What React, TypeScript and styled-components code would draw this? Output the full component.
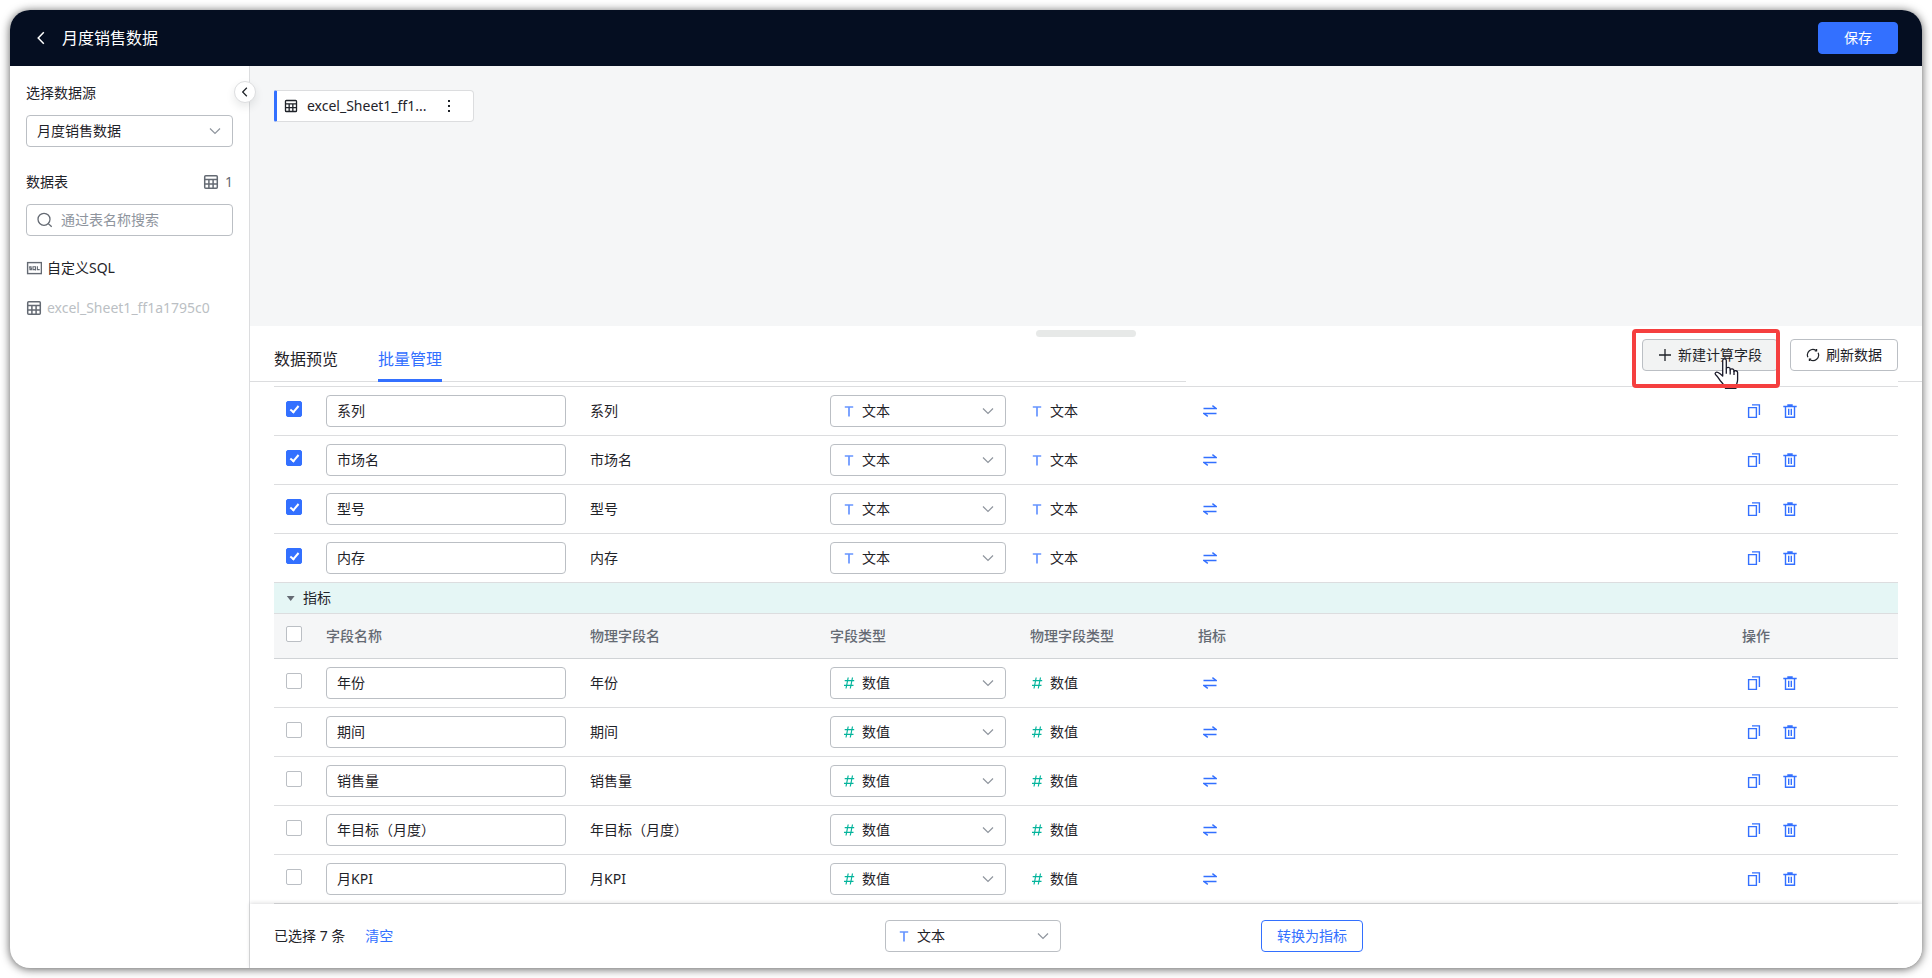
import React, { useState } from 'react';
import styled, { createGlobalStyle, css } from 'styled-components';

const color = {
  brand: '#3370ff',
  text: '#1f2329',
  secondary: '#646a73',
  muted: '#8f959e',
  disabled: '#bbbfc4',
  border: '#bbbfc4',
  line: '#dcdddf',
  surface: '#f5f6f7',
  metric: '#e5f6f5',
  number: '#04b49c',
  nav: '#050e21',
  danger: '#f53f3f',
};

const GlobalStyle = createGlobalStyle`
  *, *::before, *::after { box-sizing: border-box; }
  body {
    margin: 0;
    background: #fff;
    color: ${color.text};
    font-family: "Noto Sans", "Noto Sans CJK SC", sans-serif;
    font-size: 14px;
    line-height: 22px;
  }
  button, input, select { font: inherit; color: inherit; margin: 0; }
  button { cursor: pointer; }
  svg { display: block; flex: none; }
`;

/* ---------- layout ---------- */

const Page = styled.div`
  height: 100vh;
  padding: 10px;
`;

const Window = styled.div`
  display: flex;
  flex-direction: column;
  height: 100%;
  overflow: hidden;
  border-radius: 20px;
  background: #fff;
  box-shadow: 0 1px 10px rgba(0, 0, 0, 0.65);
`;

const TopBar = styled.header`
  display: flex;
  flex: none;
  align-items: center;
  gap: 8px;
  height: 56px;
  padding: 0 24px 0 20px;
  background: ${color.nav};
  color: #fff;
`;

const Title = styled.h1`
  flex: 1;
  margin: 0;
  font-size: 16px;
  line-height: 24px;
  font-weight: 400;
`;

const Body = styled.div`
  display: flex;
  flex: 1;
  min-height: 0;
`;

const Sidebar = styled.aside`
  position: relative;
  flex: none;
  width: 240px;
  padding: 16px 16px 0;
  border-right: 1px solid ${color.line};
`;

const Main = styled.main`
  display: flex;
  flex: 1;
  flex-direction: column;
  min-width: 0;
`;

const Canvas = styled.section`
  flex: none;
  height: 260px;
  padding: 24px;
  background: ${color.surface};
`;

const Panel = styled.section`
  position: relative;
  display: flex;
  flex: 1;
  flex-direction: column;
  min-height: 0;
`;

/* ---------- controls ---------- */

const IconButton = styled.button<{ $size?: number }>`
  display: flex;
  align-items: center;
  justify-content: center;
  width: ${(p) => p.$size ?? 24}px;
  height: ${(p) => p.$size ?? 24}px;
  padding: 0;
  border: 0;
  border-radius: 4px;
  background: none;
`;

const Button = styled.button<{ $kind?: 'primary' | 'outline' | 'hovered' }>`
  display: flex;
  align-items: center;
  justify-content: center;
  gap: 6px;
  height: 32px;
  padding: 0 15px;
  border: 1px solid ${color.border};
  border-radius: 4px;
  background: #fff;
  white-space: nowrap;
  ${(p) =>
    p.$kind === 'primary' &&
    css`
      min-width: 80px;
      border-color: ${color.brand};
      background: ${color.brand};
      color: #fff;
    `}
  ${(p) =>
    p.$kind === 'outline' &&
    css`
      border-color: ${color.brand};
      color: ${color.brand};
    `}
  ${(p) =>
    p.$kind === 'hovered' &&
    css`
      background: #f2f3f3;
    `}
`;

const LinkButton = styled.button`
  padding: 0;
  border: 0;
  background: none;
  color: ${color.brand};
`;

const CollapseButton = styled(IconButton)`
  position: absolute;
  z-index: 1;
  top: 15px;
  right: -7px;
  border: 1px solid ${color.line};
  border-radius: 50%;
  background: #fff;
  box-shadow: 0 4px 8px rgba(31, 35, 41, 0.1);
`;

const FieldLabel = styled.label`
  display: block;
  margin-bottom: 11px;
`;

const Field = styled.div<{ $gap?: number }>`
  display: flex;
  align-items: center;
  gap: ${(p) => p.$gap ?? 6}px;
  height: 32px;
  padding: 0 9px 0 10px;
  border: 1px solid ${color.border};
  border-radius: 4px;
  background: #fff;
`;

const TypeField = styled(Field)`
  width: 176px;
  padding-left: 11px;
`;

const BareSelect = styled.select`
  flex: 1;
  min-width: 0;
  height: 22px;
  padding: 0;
  border: 0;
  outline: 0;
  background: none;
  appearance: none;
`;

const BareInput = styled.input`
  flex: 1;
  min-width: 0;
  height: 22px;
  padding: 0;
  border: 0;
  outline: 0;
  background: none;
  &::placeholder { color: ${color.muted}; opacity: 1; }
`;

const NameInput = styled.input`
  display: block;
  width: 100%;
  height: 32px;
  padding: 0 10px 2px;
  border: 1px solid ${color.border};
  border-radius: 4px;
  background: #fff;
`;

const Checkbox = styled.input.attrs({ type: 'checkbox' })`
  display: flex;
  justify-content: center;
  width: 16px;
  height: 16px;
  border: 1px solid ${color.border};
  border-radius: 2px;
  background: #fff;
  appearance: none;
  &:checked {
    border-color: ${color.brand};
    background: ${color.brand};
  }
  &:checked::after {
    content: '';
    width: 5px;
    height: 9px;
    margin-top: 2px;
    border: solid #fff;
    border-width: 0 2px 2px 0;
    transform: rotate(40deg);
  }
`;

/* ---------- sidebar ---------- */

const TableHeading = styled.div`
  display: flex;
  align-items: center;
  margin: 24px 0 11px;
`;

const HeadingText = styled.label`
  flex: 1;
`;

const Count = styled.span`
  display: flex;
  align-items: center;
  gap: 6px;
  color: ${color.secondary};
`;

const TableList = styled.ul`
  margin: 12px 0 0;
  padding: 0;
  list-style: none;
`;

const TableItem = styled.li<{ $used?: boolean }>`
  display: flex;
  align-items: center;
  gap: 5px;
  height: 40px;
  color: ${(p) => (p.$used ? color.disabled : color.text)};
`;

const TableNode = styled.div`
  display: flex;
  align-items: center;
  width: 200px;
  height: 32px;
  padding-left: 7px;
  border: 1px solid ${color.line};
  border-left: 3px solid ${color.brand};
  border-radius: 2px 4px 4px 2px;
  background: #fff;
`;

const NodeName = styled.span`
  width: 124px;
  margin: 0 8px 0 9px;
  white-space: nowrap;
`;

/* ---------- field panel ---------- */

const DragHandle = styled.div`
  position: absolute;
  top: 4px;
  left: 50%;
  width: 100px;
  height: 7px;
  margin-left: -50px;
  border-radius: 4px;
  background: #e7e9e8;
`;

const Toolbar = styled.div`
  display: flex;
  flex: none;
  height: 56px;
`;

const Tabs = styled.div`
  display: flex;
  flex: 1;
  align-items: flex-end;
  gap: 40px;
  padding-left: 24px;
  box-shadow: inset 0 -1px ${color.line};
`;

const Tab = styled.button<{ $active?: boolean }>`
  height: 41px;
  padding: 0 0 2px;
  border: 0;
  border-bottom: 3px solid ${(p) => (p.$active ? color.brand : 'transparent')};
  background: none;
  color: ${(p) => (p.$active ? color.brand : color.text)};
  font-size: 16px;
  line-height: 24px;
`;

const Actions = styled.div`
  display: flex;
  flex: none;
  align-items: flex-start;
  justify-content: flex-end;
  gap: 12px;
  width: 712px;
  padding-top: 13px;
`;

const ToolbarEnd = styled.div`
  width: 24px;
  box-shadow: inset 0 -1px ${color.line};
`;

const Highlighted = styled.div`
  position: relative;
  z-index: 2;
`;

const Frame = styled.div`
  position: absolute;
  inset: -10px -2px -17px -10px;
  border: 4px solid ${color.danger};
  border-radius: 4px;
  pointer-events: none;
`;

const Pointer = styled.svg`
  position: absolute;
  top: 19px;
  left: 71px;
  pointer-events: none;
`;

const TableArea = styled.div`
  flex: 1;
  min-height: 0;
  padding: 4px 24px 0;
  overflow: auto;
`;

const Table = styled.table`
  width: 100%;
  border-top: 1px solid ${color.line};
  border-spacing: 0;
  table-layout: fixed;
`;

const Cell = styled.td`
  height: 49px;
  padding: 0 12px;
  border-bottom: 1px solid ${color.line};
  text-align: left;
`;

const CheckCell = styled(Cell)`
  padding: 0 0 5px 12px;
`;

const HeadCell = styled.th`
  height: 45px;
  padding: 0 12px;
  border-bottom: 1px solid #d0d3d6;
  background: ${color.surface};
  color: ${color.secondary};
  font-weight: 500;
  text-align: left;
`;

const HeadCheck = styled(HeadCell)`
  padding: 0 0 4px 12px;
`;

const GroupCell = styled.td`
  height: 31px;
  padding: 0 12px;
  border-bottom: 1px solid ${color.line};
  background: ${color.metric};
`;

const GroupToggle = styled.button`
  display: flex;
  align-items: center;
  gap: 7px;
  padding: 0;
  border: 0;
  background: none;
`;

const Inline = styled.div<{ $gap: number }>`
  display: flex;
  align-items: center;
  gap: ${(p) => p.$gap}px;
`;

const Footer = styled.footer`
  display: grid;
  flex: none;
  grid-template-columns: 611fr 376fr 637fr;
  align-items: center;
  justify-items: start;
  height: 64px;
  padding: 0 24px;
  background: #fff;
  box-shadow: 0 -1px 4px rgba(31, 35, 41, 0.15);
`;

/* ---------- icons ---------- */

const BackIcon = () => (
  <svg width="16" height="16" viewBox="0 0 16 16" fill="none" stroke="currentColor" strokeWidth="1.5">
    <path d="M9.8 2.2 4.2 8l5.600 5.800" />
  </svg>
);

const CollapseIcon = () => (
  <svg width="10" height="10" viewBox="0 0 12 12" fill="none" stroke="currentColor" strokeWidth="1.5">
    <path d="M8.200.9 3.200 6l5 5.100" />
  </svg>
);

const ChevronDown = () => (
  <svg width="16" height="16" viewBox="0 0 16 16" fill="none" stroke={color.muted} strokeWidth="1.2">
    <path d="m3 5.500 5 5 5-5" />
  </svg>
);

const TableIcon = ({ size = 16, tone = color.secondary }: { size?: number; tone?: string }) => (
  <svg width={size} height={size} viewBox="0 0 16 16" fill="none" stroke={tone} strokeWidth="1.5">
    <rect x="1.700" y="1.700" width="12.600" height="12.600" rx="1" />
    <path d="M1.700 5.600h12.600M1.700 9.900h12.600M5.900 5.600v8.700M10.100 5.600v8.700" />
  </svg>
);

const SqlIcon = () => (
  <svg width="16" height="16" viewBox="0 0 16 16" fill="none" stroke={color.secondary}>
    <rect x="1.600" y="2.600" width="13.800" height="11" strokeWidth="1.4" />
    <path d="M5.600 6.700H3.700v1.400h1.700v1.500H3.400M7 6.700h2.500v2.900H7zM8.600 8.800l1.200 1.600M11.400 6.200v3.400h2.300" strokeWidth="1.100" />
  </svg>
);

const SearchIcon = () => (
  <svg width="16" height="16" viewBox="0 0 16 16" fill="none" stroke={color.secondary} strokeWidth="1.300">
    <circle cx="7" cy="7.300" r="6" />
    <path d="m11.300 11.600 3.400 3.200" />
  </svg>
);

const MoreIcon = () => (
  <svg width="16" height="16" viewBox="0 0 16 16" fill={color.text}>
    <rect x="7" y="2" width="2" height="2" />
    <rect x="7" y="7" width="2" height="2" />
    <rect x="7" y="12" width="2" height="2" />
  </svg>
);

const TextTypeIcon = () => (
  <svg width="14" height="14" viewBox="0 0 14 14" fill="none" stroke={color.brand} strokeOpacity=".75" strokeWidth="1.700">
    <path d="M2.800 3h8.400M7 3v9.500" />
  </svg>
);

const NumberTypeIcon = () => (
  <svg width="14" height="14" viewBox="0 0 14 14" fill="none" stroke={color.number} strokeWidth="1.200">
    <path d="M6.200 1.500 4 12.500M10.500 1.500 8.300 12.500M2.700 4.700h9.500M2 9.300h9.500" />
  </svg>
);

const SwapIcon = () => (
  <svg width="14" height="14" viewBox="0 0 14 14" fill="none" stroke={color.brand} strokeWidth="1.400">
    <path d="M.5 4.500h12.700L9.400 1.600M13.500 9.500H.8l4 2.900" />
  </svg>
);

const CopyIcon = () => (
  <svg width="14" height="14" viewBox="0 0 14 14" fill="none" stroke={color.brand} strokeWidth="1.400">
    <path d="M1.600 3.600h7.800v9.800H1.600zM5 .9h7.400v10.200" />
  </svg>
);

const TrashIcon = () => (
  <svg width="14" height="14" viewBox="0 0 14 14" fill="none" stroke={color.brand} strokeWidth="1.400">
    <path d="M.3 2.500h13.400M4.300 1h5.400M2.500 2.500v10.800h9V2.500M5.700 4.800v6.200M8.300 4.800v6.200" />
  </svg>
);

const PlusIcon = () => (
  <svg width="14" height="14" viewBox="0 0 14 14" fill="none" stroke={color.text} strokeWidth="1.300">
    <path d="M7 1v12M1 7h12" />
  </svg>
);

const RefreshIcon = () => (
  <svg width="14" height="14" viewBox="0 0 14 14" fill="none" stroke={color.text} strokeWidth="1.200">
    <path d="M1.900 9.300A5.600 5.600 0 0 1 10 2.300M12.100 4.700A5.600 5.600 0 0 1 4 11.700" />
    <path d="M10.600.9v1.900H8.800M3.400 13.100v-1.900h1.800" />
  </svg>
);

const CaretIcon = () => (
  <svg width="10" height="10" viewBox="0 0 10 10" fill={color.secondary}>
    <path d="M.8 3h7.800L4.700 8z" />
  </svg>
);

/* ---------- data ---------- */

type FieldType = 'text' | 'number';
const typeName: Record<FieldType, string> = { text: '文本', number: '数值' };

const dimensions = ['系列', '市场名', '型号', '内存'];
const metrics = ['年份', '期间', '销售量', '年目标（月度）', '月KPI'];

const TypeIcon = ({ type }: { type: FieldType }) => (type === 'text' ? <TextTypeIcon /> : <NumberTypeIcon />);

const TypeSelect = ({ initial, label }: { initial: FieldType; label: string }) => {
  const [type, setType] = useState<FieldType>(initial);
  return (
    <TypeField>
      <TypeIcon type={type} />
      <BareSelect aria-label={label} value={type} onChange={(e) => setType(e.target.value as FieldType)}>
        <option value="text">文本</option>
        <option value="number">数值</option>
      </BareSelect>
      <ChevronDown />
    </TypeField>
  );
};

const FieldRow = ({ name, type, checked }: { name: string; type: FieldType; checked: boolean }) => (
  <tr>
    <CheckCell>
      <Checkbox defaultChecked={checked} aria-label={`选择${name}`} />
    </CheckCell>
    <Cell>
      <NameInput defaultValue={name} aria-label="字段名称" />
    </Cell>
    <Cell>{name}</Cell>
    <Cell>
      <TypeSelect initial={type} label="字段类型" />
    </Cell>
    <Cell>
      <Inline $gap={6}>
        <TypeIcon type={type} />
        {typeName[type]}
      </Inline>
    </Cell>
    <Cell>
      <IconButton aria-label="转换">
        <SwapIcon />
      </IconButton>
    </Cell>
    <Cell>
      <Inline $gap={12}>
        <IconButton aria-label="复制">
          <CopyIcon />
        </IconButton>
        <IconButton aria-label="删除">
          <TrashIcon />
        </IconButton>
      </Inline>
    </Cell>
  </tr>
);

export default function App() {
  return (
    <Page>
      <GlobalStyle />
      <Window>
        <TopBar>
          <IconButton aria-label="返回">
            <BackIcon />
          </IconButton>
          <Title>月度销售数据</Title>
          <Button $kind="primary">保存</Button>
        </TopBar>
        <Body>
          <Sidebar>
            <CollapseButton $size={22} aria-label="收起">
              <CollapseIcon />
            </CollapseButton>
            <FieldLabel htmlFor="source">选择数据源</FieldLabel>
            <Field>
              <BareSelect id="source">
                <option>月度销售数据</option>
              </BareSelect>
              <ChevronDown />
            </Field>
            <TableHeading>
              <HeadingText htmlFor="search">数据表</HeadingText>
              <Count>
                <TableIcon />1
              </Count>
            </TableHeading>
            <Field $gap={8}>
              <SearchIcon />
              <BareInput id="search" placeholder="通过表名称搜索" />
            </Field>
            <TableList>
              <TableItem>
                <SqlIcon />
                自定义SQL
              </TableItem>
              <TableItem $used>
                <TableIcon />
                excel_Sheet1_ff1a1795c0
              </TableItem>
            </TableList>
          </Sidebar>
          <Main>
            <Canvas>
              <TableNode>
                <TableIcon size={14} tone={color.text} />
                <NodeName>excel_Sheet1_ff1...</NodeName>
                <IconButton $size={20} aria-label="更多">
                  <MoreIcon />
                </IconButton>
              </TableNode>
            </Canvas>
            <Panel>
              <DragHandle />
              <Toolbar>
                <Tabs>
                  <Tab>数据预览</Tab>
                  <Tab $active>批量管理</Tab>
                </Tabs>
                <Actions>
                  <Highlighted>
                    <Button $kind="hovered">
                      <PlusIcon />
                      新建计算字段
                    </Button>
                    <Pointer width="28" height="32" viewBox="0 0 28 32" fill="#fff" stroke="#1a1a2a" strokeWidth="1.300" strokeLinejoin="round">
                      <path d="M9.700 17.700V2.600C9.700.2 13.300.2 13.300 2.600v8.200c0-2 3.900-2 3.900.4v.8c.3-1.600 3.800-1.400 3.800.8v.8c.5-1.400 3.600-1.200 3.600 1v7.200c0 3-1.600 4.200-1.600 8.500H12.500c-.8-3.500-4.600-6.200-6.300-9.200-1-1.800-2-3-3.500-4.400-1.600-1.600.5-3.200 2.400-2.200 1.800.9 3.200 2.200 4.600 3.500z" />
                      <path d="M13.300 10.800v5M17.200 11.500v5M21 12.800v4.200" />
                    </Pointer>
                    <Frame />
                  </Highlighted>
                  <Button>
                    <RefreshIcon />
                    刷新数据
                  </Button>
                </Actions>
                <ToolbarEnd />
              </Toolbar>
              <TableArea>
                <Table>
                  <colgroup>
                    <col width="40" />
                    <col width="264" />
                    <col width="240" />
                    <col width="200" />
                    <col width="168" />
                    <col />
                    <col width="168" />
                  </colgroup>
                  <tbody>
                    {dimensions.map((name) => (
                      <FieldRow key={name} name={name} type="text" checked />
                    ))}
                  </tbody>
                  <tbody>
                    <tr>
                      <GroupCell colSpan={7}>
                        <GroupToggle>
                          <CaretIcon />
                          指标
                        </GroupToggle>
                      </GroupCell>
                    </tr>
                    <tr>
                      <HeadCheck>
                        <Checkbox aria-label="全选" />
                      </HeadCheck>
                      <HeadCell>字段名称</HeadCell>
                      <HeadCell>物理字段名</HeadCell>
                      <HeadCell>字段类型</HeadCell>
                      <HeadCell>物理字段类型</HeadCell>
                      <HeadCell>指标</HeadCell>
                      <HeadCell>操作</HeadCell>
                    </tr>
                    {metrics.map((name) => (
                      <FieldRow key={name} name={name} type="number" checked={false} />
                    ))}
                  </tbody>
                </Table>
              </TableArea>
              <Footer>
                <Inline $gap={20}>
                  <span>已选择 7 条</span>
                  <LinkButton>清空</LinkButton>
                </Inline>
                <TypeSelect initial="text" label="批量字段类型" />
                <Button $kind="outline">转换为指标</Button>
              </Footer>
            </Panel>
          </Main>
        </Body>
      </Window>
    </Page>
  );
}
